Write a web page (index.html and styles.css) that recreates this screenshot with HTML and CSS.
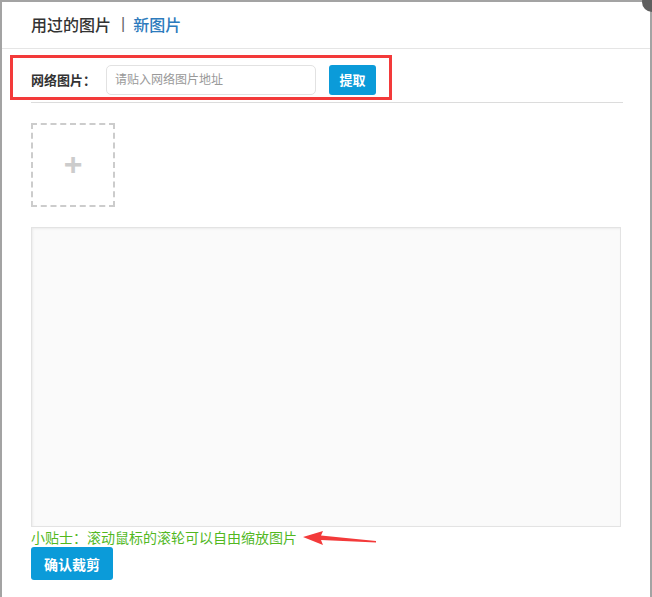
FILE: index.html
```html
<!DOCTYPE html>
<html lang="zh-CN">
<head>
<meta charset="utf-8">
<title>图片</title>
<link rel="stylesheet" href="styles.css">
</head>
<body>
<span class="close-btn"></span>
<div class="modal">
  <div class="modal-header">
    <span class="tab">用过的图片</span>
    <span class="sep">|</span>
    <span class="tab active">新图片</span>
  </div>
  <div class="modal-body">
    <div class="url-row">
      <label class="url-label">网络图片<span class="fw">：</span></label>
      <input class="url-input" type="text" placeholder="请贴入网络图片地址">
      <button class="btn btn-fetch">提取</button>
      <div class="highlight-box"></div>
    </div>
    <div class="upload-box"><span class="plus">+</span></div>
    <div class="crop-area"></div>
    <div class="tip-row">
      <span class="tip">小贴士<span class="fw">：</span>滚动鼠标的滚轮可以自由缩放图片</span>
      <svg class="arrow" width="80" height="20" viewBox="0 0 80 20">
        <path d="M0 7 L20 1 L18 5.5 L73 11 L73 12.5 L18 10 L20 15 Z" fill="#f33a3a"/>
      </svg>
    </div>
    <button class="btn btn-crop">确认裁剪</button>
  </div>
</div>
</body>
</html>
```

FILE: styles.css
```css
html, body {
  margin: 0;
  padding: 0;
}
body {
  background: #a3a3a3;
  width: 652px;
  height: 597px;
  overflow: hidden;
  position: relative;
  font-family: "Liberation Sans", "Noto Sans CJK SC", sans-serif;
}
.fw {
  font-family: "Noto Sans CJK TC", "Noto Sans CJK SC", sans-serif;
}
.close-btn {
  position: absolute;
  top: -8px;
  left: 642px;
  width: 20px;
  height: 20px;
  border-radius: 50%;
  background: #5e5e5e;
  z-index: 2;
}
.modal {
  margin: 2px 0 0 2px;
  width: 648px;
  height: 595px;
  background: #fff;
  position: relative;
}
.modal-header {
  box-sizing: border-box;
  height: 47px;
  padding-bottom: 3px;
  border-bottom: 1px solid #e5e5e5;
  display: flex;
  align-items: center;
  padding-left: 29px;
  font-size: 16px;
  font-weight: 500;
  color: #333;
}
.sep {
  margin: 0 8px 0 10px;
  font-weight: normal;
  color: #666;
}
.tab.active {
  color: #2d7bbd;
}
.modal-body {
  padding: 0 27px 0 29px;
}
.url-row {
  position: relative;
  box-sizing: border-box;
  display: flex;
  align-items: center;
  height: 54px;
  padding-top: 8px;
  border-bottom: 1px solid #dcdcdc;
}
.url-label {
  font-size: 13px;
  font-weight: bold;
  color: #333;
  width: 75px;
}
.url-input {
  box-sizing: border-box;
  width: 210px;
  height: 30px;
  border: 1px solid #e2e2e2;
  border-radius: 5px;
  padding: 0 8px;
  font-size: 12px;
  font-family: inherit;
  color: #333;
  outline: none;
}
.url-input::placeholder {
  color: #999;
}
.btn {
  border: none;
  color: #fff;
  font-family: inherit;
  font-weight: bold;
  background: #0b9bd9;
  border-radius: 3px;
  cursor: pointer;
}
.btn-fetch {
  margin-left: 13px;
  width: 47px;
  height: 30px;
  font-size: 13px;
  padding: 0;
}
.highlight-box {
  position: absolute;
  left: -21px;
  top: 6px;
  width: 376px;
  height: 39px;
  border: 3px solid #f33a3a;
}
.upload-box {
  box-sizing: border-box;
  margin-top: 20px;
  width: 84px;
  height: 84px;
  border: 2px dashed #cccccc;
  display: flex;
  align-items: center;
  justify-content: center;
}
.plus {
  font-size: 32px;
  font-weight: bold;
  color: #cccccc;
  line-height: 1;
  margin-top: -2px;
}
.crop-area {
  box-sizing: border-box;
  margin-top: 20px;
  width: 590px;
  height: 300px;
  background: #fafafa;
  border: 1px solid #e3e3e3;
  box-shadow: inset 1px 1px 2px #ececec;
}
.tip-row {
  display: flex;
  align-items: center;
  height: 20px;
}
.tip {
  font-size: 14px;
  color: #52b81f;
  line-height: 20px;
}
.arrow {
  margin-left: 6px;
  margin-top: 5px;
}
.btn-crop {
  display: block;
  width: 82px;
  height: 33px;
  font-size: 14px;
  padding: 0;
}
```
